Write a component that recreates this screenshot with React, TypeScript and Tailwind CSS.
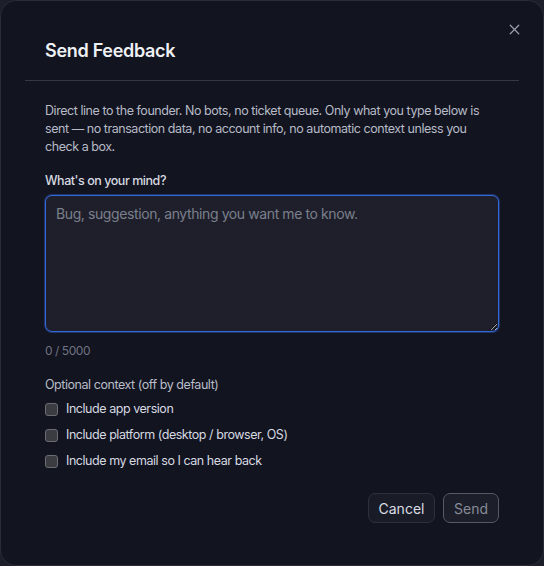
import React from 'react';
import { X } from 'lucide-react';

const options = [
  'Include app version',
  'Include platform (desktop / browser, OS)',
  'Include my email so I can hear back',
];

const App = () => {
  return (
    <div
      className="w-[544px] h-[566px] bg-[#1c1e29]"
      style={{ fontFamily: 'Inter, "Noto Sans", sans-serif' }}
    >
      <div className="relative h-full rounded-[16px] border border-[#2a2d38] bg-[#121420] px-[24px]">
        <button className="absolute top-[20px] right-[20px] text-[#9a9eaa]">
          <X className="h-[17px] w-[17px]" strokeWidth={1.75} />
        </button>

        {/* header */}
        <div className="pt-[36px] pb-[15px] px-[20px] border-b border-[#363945]">
          <h2 className="text-[18px] leading-[28px] font-semibold tracking-[-0.3px] text-[#eef0f4]">
            Send Feedback
          </h2>
        </div>

        {/* body */}
        <div className="px-[20px] pt-[21px]">
          <p className="text-[12.5px] leading-[18px] tracking-[-0.45px] text-[#b7bbc6]">
            Direct line to the founder. No bots, no ticket queue. Only what you type below is
            sent — no transaction data, no account info, no automatic context unless you
            check a box.
          </p>

          <label className="block mt-[16px] text-[12.5px] leading-[18px] font-medium tracking-[-0.45px] text-[#d7dae1]">
            What's on your mind?
          </label>
          <textarea
            className="block mt-[5px] w-full h-[137px] rounded-[7px] border border-[#3467d8] ring-1 ring-[#3467d8]/40 bg-[#1e1f2b] px-[10px] py-[8px] text-[14px] leading-[20px] tracking-[-0.4px] text-[#e0e2e8] placeholder:text-[#7b7f8c] outline-none"
            placeholder="Bug, suggestion, anything you want me to know."
          />
          <div className="mt-[10px] text-[12px] leading-[18px] tracking-[-0.45px] text-[#6f7380]">0 / 5000</div>

          <div className="mt-[16px] text-[12.5px] leading-[18px] tracking-[-0.45px] text-[#b9bdc7]">
            Optional context (off by default)
          </div>
          <div className="mt-[2px] flex flex-col">
            {options.map((o) => (
              <label
                key={o}
                className="h-[26px] flex items-center gap-[8px] text-[12.5px] tracking-[-0.45px] text-[#d6d9e0]"
              >
                <span className="h-[13px] w-[13px] rounded-[3px] border border-[#6b6d73] bg-[#3b3c41]" />
                {o}
              </label>
            ))}
          </div>

          <div className="mt-[19px] flex justify-end gap-[8px]">
            <button className="h-[30px] w-[67px] rounded-[7px] border border-[#2c303c] bg-[#191c27] text-[14px] text-[#dadde4]">
              Cancel
            </button>
            <button className="h-[30px] w-[56px] rounded-[7px] border border-[#565a66] bg-[#1c1f2a] text-[14px] text-[#878b97]">
              Send
            </button>
          </div>
        </div>
      </div>
    </div>
  );
};

export default App;
